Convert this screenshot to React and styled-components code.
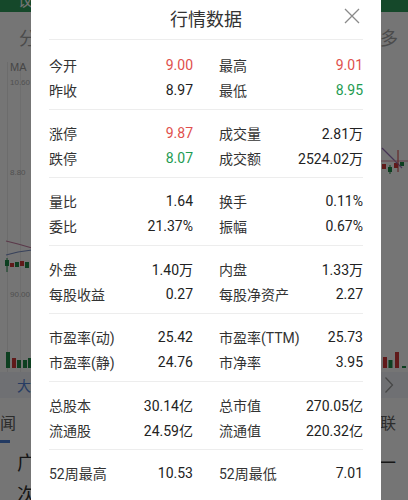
import React from "react";
import styled, { createGlobalStyle } from "styled-components";

const GlobalStyle = createGlobalStyle`
  * { box-sizing: border-box; }
  html, body { margin: 0; padding: 0; }
  body {
    width: 408px;
    height: 500px;
    overflow: hidden;
    background: #fff;
    font-family: Roboto, "Noto Sans CJK SC", sans-serif;
  }
`;

/* ---------- background page ---------- */
const Page = styled.div`
  width: 408px;
  height: 500px;
  overflow: hidden;
  display: flex;
  flex-direction: column;
`;

const AppHeader = styled.header`
  flex: none;
  height: 12px;
  background: #2f9e5c;
  display: flex;
  align-items: flex-end;
  padding-left: 18px;
  overflow: hidden;
  color: #fff;
  font-size: 15px;
  line-height: 22px;
`;

const TabBar = styled.nav`
  flex: none;
  height: 50px;
  display: flex;
  align-items: center;
  justify-content: space-between;
  padding: 0 10px 0 19px;
  color: #a3a3a3;
  font-size: 18px;
`;

const Chart = styled.div`
  flex: none;
  position: relative;
  height: 310px;
`;

const ChartLabel = styled.span`
  position: absolute;
  left: 10px;
  top: ${(p) => p.$top}px;
  font-size: ${(p) => p.$size}px;
  color: ${(p) => p.$color};
  line-height: 1;
  font-family: "Liberation Sans", Arial, sans-serif;
`;

const LinkBand = styled.div`
  flex: none;
  height: 26px;
  background: #f1f5fb;
  display: flex;
  align-items: center;
  justify-content: space-between;
  padding: 0 14px 0 17px;
  color: #5583d8;
  font-size: 14px;
`;

const SubTabs = styled.div`
  flex: none;
  height: 47px;
  display: flex;
  align-items: stretch;
  justify-content: space-between;
  padding-right: 12px;
  color: #606060;
  font-size: 16px;
`;

const SubTab = styled.div`
  display: flex;
  flex-direction: column;
  justify-content: center;
  position: relative;
  &::after {
    content: "";
    display: ${(p) => (p.$active ? "block" : "none")};
    position: absolute;
    left: 0;
    bottom: 2px;
    width: 10px;
    height: 3px;
    background: #4a7fd6;
  }
`;

const NewsItem = styled.div`
  flex: none;
  height: 32px;
  display: flex;
  align-items: center;
  justify-content: space-between;
  padding: 0 12px 0 17px;
  color: #333;
  font-size: 19px;
`;

/* ---------- modal ---------- */
const Overlay = styled.div`
  position: fixed;
  inset: 0;
  background: rgba(0, 0, 0, 0.54);
`;

const Modal = styled.section`
  position: fixed;
  left: 31px;
  top: 0;
  width: 350px;
  height: 520px;
  background: #fff;
  padding: 0 18px;
`;

const ModalHeader = styled.header`
  position: relative;
  height: 40px;
  border-bottom: 1px solid #ededed;
  display: flex;
  align-items: center;
  justify-content: center;
  padding-bottom: 4px;
`;

const Title = styled.h2`
  margin: 0;
  font-size: 18px;
  font-weight: 400;
  color: #333;
  font-family: "Noto Sans CJK SC", sans-serif;
`;

const CloseButton = styled.button`
  position: absolute;
  right: 3px;
  top: 7px;
  width: 17px;
  height: 17px;
  padding: 0;
  border: 0;
  background: none;
  display: flex;
  align-items: center;
  justify-content: center;
`;

const Group = styled.div`
  display: grid;
  grid-template-columns: 1fr 1fr;
  column-gap: 26px;
  padding: 10px 0 7px;
  border-bottom: ${(p) => (p.$last ? "none" : "1px solid #ededed")};
  &:first-of-type {
    padding-top: 12px;
  }
`;

const Cell = styled.div`
  display: flex;
  justify-content: space-between;
  align-items: center;
  height: 25px;
  font-size: 14px;
`;

const Label = styled.span`
  color: #333;
  font-family: Roboto, "Noto Sans CJK SC", sans-serif;
`;

const Value = styled.span`
  color: ${(p) =>
    p.$tone === "up" ? "#e0504c" : p.$tone === "down" ? "#1e9b52" : "#222"};
  font-family: Roboto, "Noto Sans CJK SC", sans-serif;
`;

const groups = [
  [
    ["今开", "9.00", "up"],
    ["最高", "9.01", "up"],
    ["昨收", "8.97"],
    ["最低", "8.95", "down"],
  ],
  [
    ["涨停", "9.87", "up"],
    ["成交量", "2.81万"],
    ["跌停", "8.07", "down"],
    ["成交额", "2524.02万"],
  ],
  [
    ["量比", "1.64"],
    ["换手", "0.11%"],
    ["委比", "21.37%"],
    ["振幅", "0.67%"],
  ],
  [
    ["外盘", "1.40万"],
    ["内盘", "1.33万"],
    ["每股收益", "0.27"],
    ["每股净资产", "2.27"],
  ],
  [
    ["市盈率(动)", "25.42"],
    ["市盈率(TTM)", "25.73"],
    ["市盈率(静)", "24.76"],
    ["市净率", "3.95"],
  ],
  [
    ["总股本", "30.14亿"],
    ["总市值", "270.05亿"],
    ["流通股", "24.59亿"],
    ["流通值", "220.32亿"],
  ],
  [
    ["52周最高", "10.53"],
    ["52周最低", "7.01"],
  ],
];

const RED = "#d23a3a";
const GREEN = "#1e8a46";

function ChartDrawing() {
  // coordinates relative to chart top (page y - 62)
  const bars = [
    [6, 290, 16, GREEN],
    [12, 296, 10, RED],
    [17, 298, 8, GREEN],
    [23, 298, 8, GREEN],
    [28, 296, 10, GREEN],
    [383, 295, 11, RED],
    [388.5, 298, 8, GREEN],
    [395, 290, 16, RED],
    [402, 304, 2, GREEN],
  ];
  const candles = [
    [7, 198, 6, GREEN],
    [12, 201, 4, RED],
    [17, 200, 5, GREEN],
    [22, 199, 5, RED],
    [27, 200, 6, GREEN],
    [384, 102, 5, RED],
    [390, 105, 5, GREEN],
    [396, 101, 5, RED],
    [402, 100, 4, GREEN],
  ];
  return (
    <svg width="408" height="310" viewBox="0 0 408 310" style={{ position: "absolute", inset: 0 }}>
      <line x1="7.5" y1="0" x2="7.5" y2="310" stroke="#ececec" strokeWidth="1" />
      <line x1="20.5" y1="0" x2="20.5" y2="310" stroke="#f0f0f0" strokeWidth="1" />
      <polyline points="6,179 18,182 32,186" fill="none" stroke="#c47ca0" strokeWidth="1.2" />
      <polyline points="6,193 18,190 32,188" fill="none" stroke="#7a8fc4" strokeWidth="1.2" />
      <line x1="7" y1="196" x2="7" y2="210" stroke={GREEN} strokeWidth="1" />
      {candles.map(([x, y, h, c], i) => (
        <rect key={i} x={x - 2} y={y} width="4" height={h} fill={c} />
      ))}
      <polyline points="382,86 392,96 402,106" fill="none" stroke="#9a72b8" strokeWidth="1.2" />
      <line x1="380" y1="99" x2="408" y2="99" stroke="#d98aa0" strokeWidth="1" />
      <line x1="398" y1="88" x2="398" y2="110" stroke={RED} strokeWidth="1" />
      <line x1="390" y1="103" x2="390" y2="112" stroke={GREEN} strokeWidth="1" />
      {bars.map(([x, y, h, c], i) => (
        <rect key={"b" + i} x={x} y={y} width="4" height={h} fill={c} />
      ))}
    </svg>
  );
}

export default function App() {
  return (
    <>
      <GlobalStyle />
      <Page>
        <AppHeader>议</AppHeader>
        <TabBar>
          <span>分</span>
          <span>多</span>
        </TabBar>
        <Chart>
          <ChartDrawing />
          <ChartLabel $top={0} $size={11} $color="#9a9a9a">MA</ChartLabel>
          <ChartLabel $top={17} $size={8} $color="#b0b0b0">10.60</ChartLabel>
          <ChartLabel $top={107} $size={8} $color="#b0b0b0">8.80</ChartLabel>
          <ChartLabel $top={229} $size={8} $color="#b0b0b0">90.00</ChartLabel>
        </Chart>
        <LinkBand>
          <span>大</span>
          <svg width="10" height="18" viewBox="0 0 10 18">
            <polyline points="1.5,1.5 8.5,9 1.5,16.5" fill="none" stroke="#9a9a9a" strokeWidth="1.3" />
          </svg>
        </LinkBand>
        <SubTabs>
          <SubTab $active>闻</SubTab>
          <SubTab>联</SubTab>
        </SubTabs>
        <NewsItem>
          <span>广</span>
          <span>一</span>
        </NewsItem>
        <NewsItem>
          <span>次</span>
        </NewsItem>
      </Page>
      <Overlay />
      <Modal>
        <ModalHeader>
          <Title>行情数据</Title>
          <CloseButton aria-label="关闭">
            <svg width="16" height="16" viewBox="0 0 16 16">
              <path d="M1 1 L15 15 M15 1 L1 15" stroke="#8a8a8a" strokeWidth="1.3" fill="none" />
            </svg>
          </CloseButton>
        </ModalHeader>
        {groups.map((g, gi) => (
          <Group key={gi} $last={gi === groups.length - 1}>
            {g.map(([label, value, tone]) => (
              <Cell key={label}>
                <Label>{label}</Label>
                <Value $tone={tone}>{value}</Value>
              </Cell>
            ))}
          </Group>
        ))}
      </Modal>
    </>
  );
}
